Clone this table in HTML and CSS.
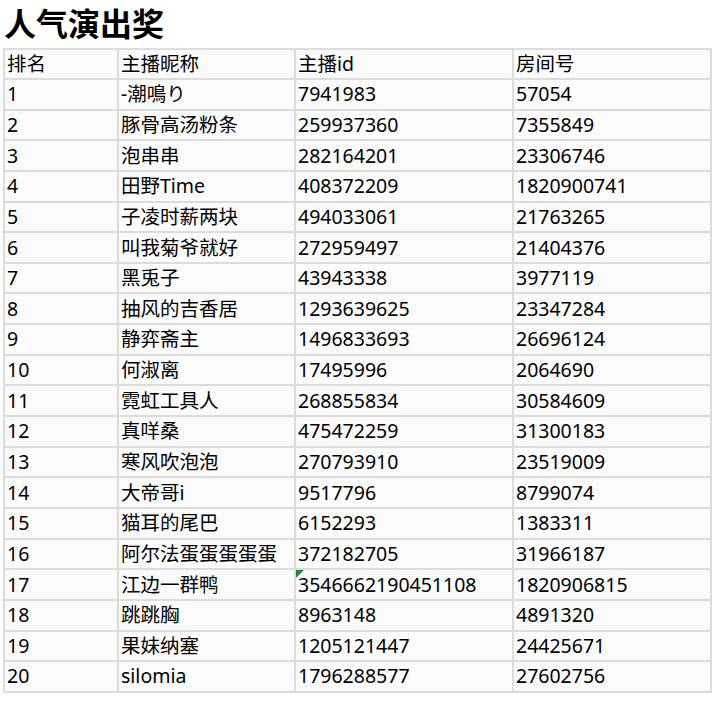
FILE: index.html
```html
<!DOCTYPE html>
<html lang="zh">
<head>
<meta charset="utf-8">
<link rel="stylesheet" href="styles.css">
</head>
<body>
<h1 class="title">人气演出奖</h1>
<table class="rank">
<colgroup><col class="c1"><col class="c2"><col class="c3"><col class="c4"></colgroup>
<thead><tr><td>排名</td><td>主播昵称</td><td>主播id</td><td>房间号</td></tr></thead>
<tbody>
<tr><td>1</td><td>-潮鳴り</td><td>7941983</td><td>57054</td></tr>
<tr><td>2</td><td>豚骨高汤粉条</td><td>259937360</td><td>7355849</td></tr>
<tr><td>3</td><td>泡串串</td><td>282164201</td><td>23306746</td></tr>
<tr><td>4</td><td>田野Time</td><td>408372209</td><td>1820900741</td></tr>
<tr><td>5</td><td>子凌时薪两块</td><td>494033061</td><td>21763265</td></tr>
<tr><td>6</td><td>叫我菊爷就好</td><td>272959497</td><td>21404376</td></tr>
<tr><td>7</td><td>黑兎子</td><td>43943338</td><td>3977119</td></tr>
<tr><td>8</td><td>抽风的吉香居</td><td>1293639625</td><td>23347284</td></tr>
<tr><td>9</td><td>静弈斋主</td><td>1496833693</td><td>26696124</td></tr>
<tr><td>10</td><td>何淑离</td><td>17495996</td><td>2064690</td></tr>
<tr><td>11</td><td>霓虹工具人</td><td>268855834</td><td>30584609</td></tr>
<tr><td>12</td><td>真咩桑</td><td>475472259</td><td>31300183</td></tr>
<tr><td>13</td><td>寒风吹泡泡</td><td>270793910</td><td>23519009</td></tr>
<tr><td>14</td><td>大帝哥i</td><td>9517796</td><td>8799074</td></tr>
<tr><td>15</td><td>猫耳的尾巴</td><td>6152293</td><td>1383311</td></tr>
<tr><td>16</td><td>阿尔法蛋蛋蛋蛋蛋</td><td>372182705</td><td>31966187</td></tr>
<tr><td>17</td><td>江边一群鸭</td><td class="flag">3546662190451108</td><td>1820906815</td></tr>
<tr><td>18</td><td>跳跳胸</td><td>8963148</td><td>4891320</td></tr>
<tr><td>19</td><td>果妹纳塞</td><td>1205121447</td><td>24425671</td></tr>
<tr><td>20</td><td>silomia</td><td>1796288577</td><td>27602756</td></tr>
</tbody>
</table>
</body>
</html>
```
FILE: styles.css
```css
html, body {
  margin: 0;
  padding: 0;
  background: #ffffff;
}
body {
  font-family: "Noto Sans", "Noto Sans CJK SC", sans-serif;
  color: #000;
}
.title {
  margin: 0;
  height: 45px;
  line-height: 45px;
  padding-left: 4px;
  font-family: "Noto Sans CJK SC", sans-serif;
  font-size: 32px;
  font-weight: 700;
  color: #000;
}
.rank {
  margin: 3px 0 0 3px;
  border-collapse: collapse;
  table-layout: fixed;
  width: 707px;
  background: #fbfbfb;
}
.c1 { width: 114px; }
.c2 { width: 177px; }
.c3 { width: 218px; }
.c4 { width: 198px; }
.rank td {
  border: 2px solid #dcdcdc;
  height: 30.65px;
  padding: 0 0 0 2px;
  font-size: 19.5px;
  line-height: 24px;
  white-space: nowrap;
  vertical-align: middle;
  box-sizing: border-box;
}
.rank thead td {
  height: 30px;
}
.flag {
  position: relative;
}
.flag::before {
  content: "";
  position: absolute;
  left: 0;
  top: 0;
  width: 0;
  height: 0;
  border-top: 8px solid #1e8a36;
  border-right: 8px solid transparent;
}
```
